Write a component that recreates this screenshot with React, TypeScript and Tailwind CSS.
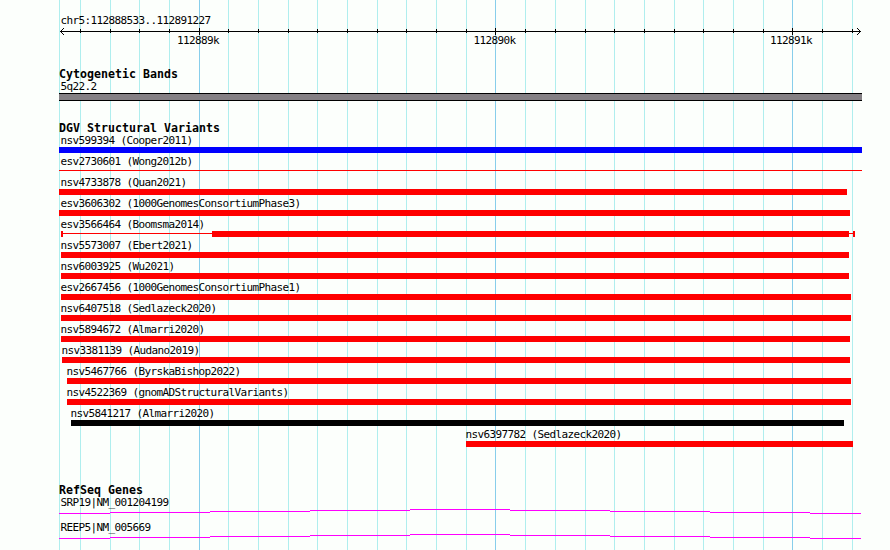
const gridLines = [
  59, 80, 110, 139, 169, 199, 228, 258, 288, 317, 347, 377, 406, 436, 466, 495,
  525, 555, 585, 614, 644, 674, 703, 733, 763, 792, 822, 852,
];
const majorLines = [199, 495, 792];

const TRACK_LEFT = 59;

type Variant = {
  label: string;
  start: number;
  end: number;
  color: string;
  kind?: "bar" | "line" | "split";
};

const variants: Variant[] = [
  { label: "nsv599394 (Cooper2011)", start: 59, end: 862, color: "bg-[#0000ff]" },
  { label: "esv2730601 (Wong2012b)", start: 59, end: 862, color: "bg-[#ff0000]", kind: "line" },
  { label: "nsv4733878 (Quan2021)", start: 59, end: 847, color: "bg-[#ff0000]" },
  { label: "esv3606302 (1000GenomesConsortiumPhase3)", start: 59, end: 850, color: "bg-[#ff0000]" },
  { label: "esv3566464 (Boomsma2014)", start: 61, end: 855, color: "bg-[#ff0000]", kind: "split" },
  { label: "nsv5573007 (Ebert2021)", start: 61, end: 849, color: "bg-[#ff0000]" },
  { label: "nsv6003925 (Wu2021)", start: 61, end: 849, color: "bg-[#ff0000]" },
  { label: "esv2667456 (1000GenomesConsortiumPhase1)", start: 61, end: 851, color: "bg-[#ff0000]" },
  { label: "nsv6407518 (Sedlazeck2020)", start: 61, end: 851, color: "bg-[#ff0000]" },
  { label: "nsv5894672 (Almarri2020)", start: 61, end: 850, color: "bg-[#ff0000]" },
  { label: "nsv3381139 (Audano2019)", start: 62, end: 850, color: "bg-[#ff0000]" },
  { label: "nsv5467766 (ByrskaBishop2022)", start: 67, end: 851, color: "bg-[#ff0000]" },
  { label: "nsv4522369 (gnomADStructuralVariants)", start: 67, end: 851, color: "bg-[#ff0000]" },
  { label: "nsv5841217 (Almarri2020)", start: 71, end: 844, color: "bg-black" },
  { label: "nsv6397782 (Sedlazeck2020)", start: 466, end: 853, color: "bg-[#ff0000]" },
];

const genes = ["SRP19|NM_001204199", "REEP5|NM_005669"];

const geneSteps = [
  [0, 51, 4],
  [51, 100, 3],
  [151, 100, 2],
  [251, 100, 1],
  [351, 100, 0],
  [451, 100, 1],
  [551, 100, 2],
  [651, 100, 3],
  [751, 51, 4],
];

function GridBackdrop() {
  return (
    <div className="absolute inset-0 flex pl-[59px]">
      {gridLines.map((x, i) => (
        <div
          key={x}
          className={`h-full shrink-0 border-l ${
            majorLines.includes(x) ? "border-[#87ceeb]" : "border-[#afeeee]"
          }`}
          style={{ width: (gridLines[i + 1] ?? x + 10) - x }}
        />
      ))}
    </div>
  );
}

function Ruler() {
  return (
    <svg width="803" height="8" className="block" shapeRendering="crispEdges">
      <rect x="1" y="4" width="801" height="1" />
      {[0, 1, 2, 3].map((i) => (
        <g key={i}>
          <rect x={1 + i} y={4 - i} width="1" height="1" />
          <rect x={1 + i} y={4 + i} width="1" height="1" />
          <rect x={801 - i} y={4 - i} width="1" height="1" />
          <rect x={801 - i} y={4 + i} width="1" height="1" />
        </g>
      ))}
      {gridLines.slice(1).map((x) =>
        majorLines.includes(x) ? (
          <rect key={x} x={x - TRACK_LEFT} y="1" width="1" height="7" />
        ) : (
          <rect key={x} x={x - TRACK_LEFT} y="2" width="1" height="4" />
        ),
      )}
    </svg>
  );
}

function Title({ children }: { children: string }) {
  return (
    <h2 className="h-3 text-[11.6px] leading-3 font-bold tracking-[0.016px]">
      {children}
    </h2>
  );
}

function VariantRow({ label, start, end, color, kind = "bar" }: Variant) {
  return (
    <div className="h-[21px]">
      <div
        className="h-[13px] pt-px leading-3"
        style={{ paddingLeft: Math.max(start - TRACK_LEFT - 0.5, 1.5) }}
      >
        {label}
      </div>
      <div
        className="flex h-1.5 items-center"
        style={{ marginLeft: start - TRACK_LEFT, width: end - start }}
      >
        {kind === "bar" && <div className={`h-1.5 w-full ${color}`} />}
        {kind === "line" && <div className={`mb-px h-px w-full ${color}`} />}
        {kind === "split" && (
          <>
            <div className={`h-1.5 w-0.5 ${color}`} />
            <div className={`mb-px h-px w-[149px] ${color}`} />
            <div className={`h-1.5 w-[637px] ${color}`} />
            <div className={`mb-px h-px w-1 ${color}`} />
            <div className={`h-1.5 w-0.5 ${color}`} />
          </>
        )}
      </div>
    </div>
  );
}

function GeneRow({ name }: { name: string }) {
  return (
    <div className="h-[25px]">
      <div className="h-[13px] pt-px pl-[1.5px] leading-3">{name}</div>
      <svg width="803" height="5" className="block" shapeRendering="crispEdges">
        {geneSteps.map(([x, width, y]) => (
          <rect key={x} x={x} y={y} width={width} height="1" fill="#ff00ff" />
        ))}
      </svg>
    </div>
  );
}

export default function App() {
  return (
    <div className="relative h-[550px] w-[890px] overflow-hidden bg-[#fcfffc] font-['DejaVu_Sans_Mono','Liberation_Mono',monospace] text-[11px] tracking-[-0.622px] whitespace-pre text-black">
      <GridBackdrop />
      <main className="relative flex w-[862px] flex-col pl-[59px]">
        <header className="h-[68px] pt-[15px]">
          <div className="h-3 pl-[1.5px] leading-3">
            chr5:112888533..112891227
          </div>
          <Ruler />
          <div className="flex gap-[254.5px] pl-[118px] leading-3">
            <span className="w-[42px]">112889k</span>
            <span className="w-[42px]">112890k</span>
            <span className="w-[42px]">112891k</span>
          </div>
        </header>

        <section className="h-[54px]">
          <Title>Cytogenetic Bands</Title>
          <div className="h-[13px] pt-px pl-[1.5px] leading-3">5q22.2</div>
          <div className="h-2 border-y border-black bg-[#848084]" />
        </section>

        <section className="h-[362px]">
          <Title>DGV Structural Variants</Title>
          {variants.map((variant) => (
            <VariantRow key={variant.label} {...variant} />
          ))}
        </section>

        <section>
          <Title>RefSeq Genes</Title>
          {genes.map((name) => (
            <GeneRow key={name} name={name} />
          ))}
        </section>
      </main>
    </div>
  );
}
